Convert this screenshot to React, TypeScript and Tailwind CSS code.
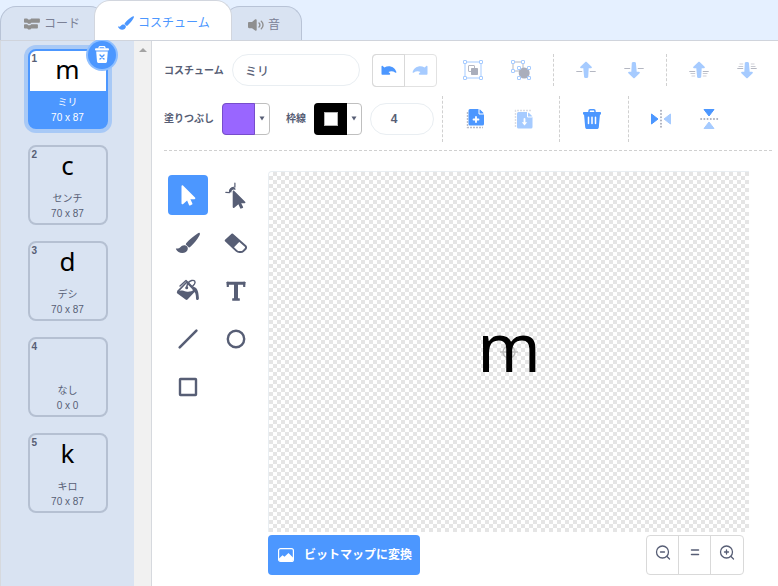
import { useState } from "react";
import type { ReactNode } from "react";

const costumes = [
  { name: "ミリ", glyph: "m", size: "70 x 87" },
  { name: "センチ", glyph: "c", size: "70 x 87" },
  { name: "デシ", glyph: "d", size: "70 x 87" },
  { name: "なし", glyph: "", size: "0 x 0" },
  { name: "キロ", glyph: "k", size: "70 x 87" },
];

const PAGE = "M2 0h9l5 5v10a1.5 1.5 0 0 1-1.5 1.5H2A1.500 1.500 0 0 1 .5 15V1.500A1.500 1.500 0 0 1 2 0z";

const UNDO =
  "M2.500 6.500c0-.7.700-1 1.200-.5l1.700 1.500c4.700-2.600 10.300-.6 12 4.600.2.600-.3 1-.9.600-2.500-1.600-4.600-1.800-7-.8l1.400 1.400c.6.600.3 1.400-.5 1.400H3.500c-.6 0-1-.4-1-1z";

function BrushShape() {
  return (
    <>
      <path d="M31.600 9.900c.6.500.4 1.600-.2 2.600-2 3.700-5.600 8.300-9 11.300-.6.600-1.300.9-1.700.5l-2.600-2.500c-.5-.5-.2-1.200.3-1.800 3.200-3.700 7.700-7.400 11.200-9.600.8-.5 1.500-.9 2-.5z" />
      <path d="M16.900 22.200c2 .3 3.200 2 2.900 3.900-.4 2.500-2.800 4-5.600 4-2.700 0-5-1.700-6.300-4.100-.2-.4.100-.7.500-.6 1.600.5 2.800.1 3.900-1.200 1.200-1.500 2.700-2.300 4.600-2z" />
    </>
  );
}

// All tool drawings share a 40x40 box
const tools: { id: string; art: ReactNode }[] = [
  {
    id: "選択",
    art: <path d="M13.500 11.200c0-.9.900-1.200 1.500-.6l12 12c.7.700.3 1.600-.6 1.600h-4l2 4.300c.2.500 0 .9-.4 1.100l-1.900.8c-.5.200-.9 0-1.100-.5l-1.900-4.500-3.900 3.500c-.7.600-1.700.2-1.700-.7z" />,
  },
  {
    id: "形を変える",
    art: (
      <>
        <path d="M16.700 16.300c0-.9.800-1.200 1.400-.6l11 11c.7.700.3 1.500-.5 1.500h-3.400l1.900 3.700c.2.500 0 .8-.4 1l-1.500.7c-.4.200-.8 0-1-.4l-1.800-4-4.100 3.500c-.7.600-1.600.2-1.600-.7z" />
        <path d="M13.300 17.300c-.7-2.500.5-4.500 3.700-5.200l2.300 1.200.2 1.700c-1.800-1-4-.6-4.200 2.400z" />
        <path d="M9.800 17.400l3.500.3c.3-3.600 2-5.500 5.600-5.700V8" fill="none" stroke="currentColor" strokeWidth="1.200" strokeLinecap="round" />
      </>
    ),
  },
  { id: "筆", art: <BrushShape /> },
  {
    id: "消しゴム",
    art: (
      <>
        <path d="M16.300 11.500L9.700 17.600 20.500 27.900c.8.800 1.800 1.200 2.900 1.200h1.400c1 0 1.800-.3 2.500-1l2.100-2.100c.9-.9.900-2.200 0-3.100z" fill="none" stroke="currentColor" strokeWidth="2" strokeLinejoin="round" />
        <path d="M16 10.700l8.200 7.300-7.200 7.200-7.800-7.500z" />
      </>
    ),
  },
  {
    id: "塗りつぶし",
    art: (
      <>
        <path d="M9.600 20.600l9-9.300 8.300 8.300" fill="none" stroke="currentColor" strokeWidth="1.600" strokeLinejoin="round" />
        <path d="M9.600 20c3.400-1.300 6-.2 8.400.4 3 .8 6-.3 8-1.700l1.500 1.300-8 8.500c-.6.600-1.300.6-1.900.1L9.400 22.400c-.8-.5-.7-1.700.2-2.400z" />
        <path d="M12 15l6-5.600 5.800 5.800M18.700 16.500c.4-3.500 2.600-6.300 5-7 3-.7 4.200 1.200 2.700 3.600l-2 2.400" fill="none" stroke="currentColor" strokeWidth="1.400" strokeLinecap="round" strokeLinejoin="round" />
        <circle cx="18.700" cy="16.800" r="1.500" />
        <path d="M24.700 15.500c4 .9 5.700 3.200 6.200 11.500.1 2.700-2.900 2.800-2.900.2 0-3.200-.3-5.700-3.300-8.200z" />
      </>
    ),
  },
  {
    id: "テキスト",
    art: (
      <>
        <rect x="10.700" y="10.700" width="18.600" height="3" rx="0.500" />
        <rect x="10.700" y="10.700" width="2.200" height="5.300" rx="0.500" />
        <rect x="27.100" y="10.700" width="2.200" height="5.300" rx="0.500" />
        <rect x="18" y="12" width="4" height="17" />
        <rect x="16.200" y="27.300" width="7.600" height="2.400" rx="0.500" />
      </>
    ),
  },
  { id: "直線", art: <path d="M11.700 28.300l16.700-16.700" stroke="currentColor" strokeWidth="2.600" strokeLinecap="round" /> },
  { id: "円", art: <circle cx="20" cy="20" r="8.200" fill="none" stroke="currentColor" strokeWidth="2.400" /> },
  { id: "四角形", art: <rect x="12" y="12" width="16" height="16" rx="0.500" fill="none" stroke="currentColor" strokeWidth="2.400" /> },
];

function IconButton({ label, children }: { label: string; children: ReactNode }) {
  return (
    <button aria-label={label} className="size-5 shrink-0">
      <svg viewBox="0 0 20 20" className="size-5 overflow-visible" fill="none">
        {children}
      </svg>
    </button>
  );
}

function Handle({ x, y }: { x: number; y: number }) {
  return <rect x={x} y={y} width="3" height="3" rx="0.300" fill="white" stroke="#a6cbff" />;
}

function Arrow({ down = false, lines }: { down?: boolean; lines: number }) {
  return (
    <g transform={down ? "rotate(180 10 10)" : undefined}>
      <path d="M9.300 2.100c.4-.4 1-.4 1.400 0l4.900 4.700c.6.600.2 1.500-.6 1.500h-2.300l-.5 8.700c-.1 1.300-4 1.300-4.100 0l-.8-8.700H5c-.8 0-1.200-.9-.6-1.500z" fill="#a6cbff" />
      <path d="M.3 11.500h5.900M13.800 11.500h5.900" stroke="#b4b7c2" />
      {lines > 1 && (
        <>
          <path d="M1.500 13.500h4.700M13.800 13.500h4.700" stroke="#c8cad2" />
          <path d="M2.500 16h3.700M13.800 16h3.700" stroke="#dfe0e5" strokeWidth="1.500" />
        </>
      )}
    </g>
  );
}

function Tabs() {
  return (
    <nav className="flex h-10 items-end bg-[#e5f0ff] text-xs text-[#7b8196]">
      <button className="flex h-[34px] w-[106px] items-center gap-1 rounded-t-2xl border border-b-0 border-[#b8c3d6] bg-[#d9e3f2] pl-[23px]">
        <svg viewBox="0 0 16 12" className="h-3 w-4" fill="#8f8f8f">
          <path d="M.8.500h2.400l1 1h2l1-1h7.900c.5 0 .8.300.8.800V4c0 .5-.3.800-.8.800H7.300l-1 1H4.200l-1-1H.8C.3 4.800 0 4.500 0 4V1.300C0 .8.300.5.800.5z" />
          <path d="M.8 6.200h2.400l1 1h2l1-1h5.900c.5 0 .8.300.8.800v2.700c0 .5-.3.800-.8.800H7.300l-1 1H4.200l-1-1H.8c-.5 0-.8-.3-.8-.8V7c0-.5.300-.8.800-.8z" />
        </svg>
        コード
      </button>
      <button className="relative z-10 -ml-3 flex h-10 w-[138px] items-center gap-1 rounded-t-2xl border border-b-0 border-[#d2d6de] bg-white pt-1 pl-[23px] text-[#4c97ff]">
        <svg viewBox="8 9 24 22" className="h-4 w-4" fill="currentColor">
          <BrushShape />
        </svg>
        コスチューム
      </button>
      <button className="-ml-2 flex h-[34px] w-[78px] items-center gap-1 rounded-t-2xl border border-b-0 border-[#b8c3d6] bg-[#d9e3f2] pt-[2px] pl-[23px]">
        <svg viewBox="0 0 16 12" className="h-3 w-4" fill="#8f8f8f">
          <path d="M7.200.3C8 0 8.700.3 8.700 1v10c0 .8-.8 1-1.500.6L4 9.200H1.200C.4 9.200 0 8.800 0 8V4.200C0 3.400.4 3 1.200 3H4z" />
          <path d="M11 4c1.200 1 1.200 3 0 4M13.300 2.300c2.300 2 2.300 5.400 0 7.400" fill="none" stroke="#8f8f8f" strokeWidth="1.400" strokeLinecap="round" />
        </svg>
        音
      </button>
    </nav>
  );
}

function CostumeList() {
  const [current, setCurrent] = useState(0);

  return (
    <aside className="flex w-[152px] shrink-0 border-x border-[#d6d9de] bg-[#d9e3f2]">
      <ul className="flex flex-1 flex-col items-center gap-4 pt-2">
        {costumes.map((c, i) => {
          const on = i === current;
          return (
            <li key={c.name} className="relative">
              <button
                onClick={() => setCurrent(i)}
                className={`flex size-20 flex-col overflow-hidden rounded-lg border-2 text-[10px] leading-4 ${
                  on
                    ? "border-[#4c97ff] bg-[#4c97ff] text-white ring-4 ring-[#4c97ff]/35"
                    : "border-[#b5c0d2] text-[#575e75]"
                }`}
              >
                <span className={`flex h-10 w-full justify-center ${on ? "bg-white" : ""}`}>
                  <span className="font-['Noto_Sans'] text-[26px] leading-9 text-black">{c.glyph}</span>
                </span>
                <span className="w-full pt-1">{c.name}</span>
                <span className="-mt-px w-full">{c.size}</span>
              </button>
              <span className="absolute top-1 left-1 text-[10px] leading-3 font-bold text-[#575e75]">{i + 1}</span>
              {on && (
                <button
                  aria-label="削除"
                  className="absolute -top-2 -right-2 flex size-7 items-center justify-center rounded-full bg-[#4c97ff] ring-2 ring-[#8fbfff]"
                >
                  <svg viewBox="0 0 16 18" className="h-[18px] w-4">
                    <path d="M5 2.500V2c0-.9.600-1.500 1.500-1.500h3c.9 0 1.500.6 1.500 1.500v.5" fill="none" stroke="white" strokeWidth="1.300" />
                    <rect x="1" y="2.300" width="14" height="2.200" rx="1" fill="white" />
                    <path d="M2.200 5.500h11.600l-.8 10c-.1.900-.7 1.500-1.600 1.500H4.600c-.9 0-1.500-.6-1.600-1.500z" fill="white" />
                    <path d="M6 9l4 4M10 9l-4 4" stroke="#4c97ff" strokeWidth="1.400" strokeLinecap="round" />
                  </svg>
                </button>
              )}
            </li>
          );
        })}
      </ul>
      <div className="w-[17px] bg-[#f1f1f1] pt-[7px]">
        <svg viewBox="0 0 8 4" className="mx-auto h-1 w-2" fill="#a3a3a3">
          <path d="M4 0l4 4H0z" />
        </svg>
      </div>
    </aside>
  );
}

function Swatch({ id, children }: { id: string; children: ReactNode }) {
  return (
    <button id={id} className="flex h-8 w-12 shrink-0 rounded border border-[#bfbfbf]">
      {children}
      <span className="flex h-full flex-1 items-center justify-center">
        <svg viewBox="0 0 6 5" className="h-[5px] w-[6px]" fill="#575e75">
          <path d="M.5.500h5L3 4.500z" />
        </svg>
      </span>
    </button>
  );
}

function Toolbar() {
  return (
    <div className="mr-[6px] ml-3 border-b border-dashed border-[#d0d0d0] text-[10px] font-bold">
      <div className="flex h-[58px] items-center">
        <label htmlFor="costume" className="w-[68px] shrink-0">コスチューム</label>
        <input
          id="costume"
          defaultValue="ミリ"
          className="h-8 w-32 rounded-full border border-[#e9eef2] px-3 text-xs font-medium outline-none"
        />
        <div className="ml-3 flex h-[33px] w-[65px] shrink-0 rounded border border-[#e2e2e2]">
          <button aria-label="取り消し" className="-m-px flex w-[33px] items-center justify-center rounded-l border border-[#d9d9d9]">
            <svg viewBox="0 0 20 20" className="size-5" fill="#4c97ff">
              <path d={UNDO} />
            </svg>
          </button>
          <button aria-label="やり直し" className="flex flex-1 items-center justify-center">
            <svg viewBox="0 0 20 20" className="size-5 -scale-x-100" fill="#a6cbff">
              <path d={UNDO} />
            </svg>
          </button>
        </div>
        <div className="ml-[26px] flex gap-7">
          <IconButton label="グループ化">
            <rect x="2" y="2" width="16" height="16" stroke="#a6cbff" />
            <Handle x={0.5} y={0.5} />
            <Handle x={16.5} y={0.5} />
            <Handle x={0.5} y={16.5} />
            <Handle x={16.5} y={16.5} />
            <rect x="5.500" y="5.500" width="6" height="6" rx="0.500" stroke="#b4b7c2" />
            <rect x="8" y="8" width="7" height="7" rx="0.800" fill="#aaaebb" />
          </IconButton>
          <IconButton label="グループ解除">
            <path d="M2 2h10v9H2z" stroke="#b4b7c2" />
            <circle cx="13.200" cy="13" r="5.500" fill="#aaaebb" />
            <Handle x={0.5} y={0.5} />
            <Handle x={10.5} y={0.5} />
            <Handle x={0.5} y={9.5} />
            <Handle x={6.5} y={6.5} />
            <Handle x={16.5} y={6.5} />
            <Handle x={6.5} y={16.5} />
            <Handle x={16.5} y={16.5} />
          </IconButton>
        </div>
        <div className="ml-[22px] flex h-8 items-center gap-7 border-l border-dashed border-[#d0d0d0] pl-[22px]">
          <IconButton label="手前に出す">
            <Arrow lines={1} />
          </IconButton>
          <IconButton label="奥に下げる">
            <Arrow down lines={1} />
          </IconButton>
        </div>
        <div className="ml-[22px] flex h-8 items-center gap-7 border-l border-dashed border-[#d0d0d0] pl-[22px]">
          <IconButton label="最前面">
            <Arrow lines={3} />
          </IconButton>
          <IconButton label="最背面">
            <Arrow down lines={3} />
          </IconButton>
        </div>
      </div>

      <div className="-mt-1 flex h-[55px] items-center pb-2">
        <label htmlFor="fill" className="w-[58px] shrink-0">塗りつぶし</label>
        <Swatch id="fill">
          <span className="-m-px w-[33px] rounded-l border border-[#774dcb] bg-[#9966ff]" />
        </Swatch>
        <label htmlFor="outline" className="ml-4 w-7 shrink-0">枠線</label>
        <Swatch id="outline">
          <span className="-m-px flex w-[33px] items-center justify-center rounded-l bg-black">
            <span className="size-[14px] border border-[#b3b3b3] bg-white" />
          </span>
        </Swatch>
        <input
          aria-label="枠線の太さ"
          defaultValue="4"
          className="ml-2 h-8 w-16 rounded-full border border-[#e9eef2] pr-4 text-center text-xs font-bold outline-none"
        />
        <div className="ml-2 flex h-[46px] items-center gap-7 border-l border-dashed border-[#d0d0d0] pl-[23px]">
          <IconButton label="コピー">
            <path d="M1.500 3v15.500H17" stroke="#b9bcc7" strokeWidth="1.400" strokeDasharray="2 1" />
            <path d={PAGE} transform="translate(2)" fill="#4c97ff" />
            <path d="M13 0v5h5" stroke="white" />
            <path d="M14 .500v3.500h3.500z" fill="#4c97ff" />
            <path d="M10 8v5M7.500 10.500h5" stroke="white" strokeWidth="1.800" strokeLinecap="round" />
          </IconButton>
          <IconButton label="貼り付け">
            <path d="M1.500 18V1.500H17" stroke="#dcdde3" strokeWidth="1.400" strokeDasharray="2 1" />
            <path d={PAGE} transform="translate(2.500 3)" fill="#a6cbff" />
            <path d="M13.500 3v5h5" stroke="white" />
            <path d="M14.500 3.500v3.500h3.500z" fill="#a6cbff" />
            <path d="M10.500 10v4" stroke="white" strokeWidth="1.800" strokeLinecap="round" />
            <path d="M7.800 13.200h5.400l-2.700 3.200z" fill="white" />
          </IconButton>
        </div>
        <div className="ml-[25px] flex h-[46px] items-center border-l border-dashed border-[#d0d0d0] pl-[22px]">
          <IconButton label="削除">
            <path d="M7 3V1.900C7 1.200 7.500.800 8.200.800h3.600c.7 0 1.200.4 1.200 1.100V3" stroke="#4c97ff" strokeWidth="1.500" />
            <path d="M2 3h16c.6 0 1 .4 1 1v1.500H1V4c0-.6.400-1 1-1z" fill="#4c97ff" />
            <path d="M2 5h16l-1.200 13.200c-.1 1.100-.8 1.800-1.900 1.800H5.100c-1.100 0-1.800-.7-1.900-1.800z" fill="#4c97ff" />
            <path d="M6.500 8.200v6.300M10 8.200v6.300M13.500 8.200v6.300" stroke="white" strokeWidth="1.500" strokeLinecap="round" />
          </IconButton>
        </div>
        <div className="ml-[26px] flex h-[46px] items-center gap-7 border-l border-dashed border-[#d0d0d0] pl-[22px]">
          {[0, 90].map((turn) => (
            <IconButton key={turn} label={turn ? "上下反転" : "左右反転"}>
              <g transform={`rotate(${turn} 10 10)`}>
                <path d="M.5 5v10l6.500-5z" fill="#4c97ff" stroke="#4c97ff" strokeLinejoin="round" />
                <path d="M19.500 5v10L13 10z" fill="#a6cbff" stroke="#a6cbff" strokeLinejoin="round" />
                <path d="M10 1.800v17" stroke="#aaaebb" strokeWidth="2" strokeLinecap="round" strokeDasharray="0.010 3.200" />
              </g>
            </IconButton>
          ))}
        </div>
      </div>
    </div>
  );
}

function PaintArea() {
  const [tool, setTool] = useState("選択");

  return (
    <div className="flex pt-5 pr-[29px] pl-4">
      <div className="grid shrink-0 grid-cols-2 content-start gap-2 pt-1">
        {tools.map((t) => (
          <button
            key={t.id}
            aria-label={t.id}
            onClick={() => setTool(t.id)}
            className={`size-10 rounded ${t.id === tool ? "bg-[#4c97ff] text-white" : "text-[#575e75]"}`}
          >
            <svg viewBox="0 0 40 40" className="size-10" fill="currentColor">
              {t.art}
            </svg>
          </button>
        ))}
      </div>

      <div className="ml-3 min-w-0 flex-1">
        <div className="relative flex aspect-4/3 items-center justify-center overflow-hidden rounded-tl border-t border-l border-[#e9eef2] bg-white bg-[conic-gradient(#e5e5e5_25%,#ffffff_0_50%,#e5e5e5_0_75%,#ffffff_0)] bg-[length:8px_8px] pb-3">
          <svg viewBox="0 0 20 20" className="absolute inset-0 m-auto size-5" fill="none" stroke="#bdbdbd" strokeWidth="1.500">
            <circle cx="10" cy="10" r="6" />
            <path d="M10 1v7M10 12v7M1 10h7M12 10h7" />
          </svg>
          <span className="relative font-['Noto_Sans'] text-[68px] leading-none text-black">m</span>
        </div>
        <div className="mt-[3px] flex justify-between pr-[5px]">
          <button className="flex h-10 items-center gap-[10px] rounded bg-[#4c97ff] pr-2 pl-[10px] text-xs font-bold text-white">
            <svg viewBox="0 0 16 14" className="h-[14px] w-4" fill="none">
              <rect x="0.600" y="0.600" width="14.800" height="12.800" rx="2" stroke="white" strokeWidth="1.200" />
              <path d="M1 10.500l3.500-3.300 2 1.600 4-3.800 4.500 4.500v2c0 1-.7 1.700-1.700 1.700H2.700c-1 0-1.700-.7-1.700-1.700z" fill="white" />
            </svg>
            ビットマップに変換
          </button>
          <div className="flex h-10 divide-x divide-[#d9d9d9] rounded border border-[#d9d9d9]">
            <button aria-label="縮小" className="flex w-8 items-center justify-center pb-1">
              <svg viewBox="0 0 16 16" className="size-4" fill="none" stroke="#575e75" strokeWidth="1.300" strokeLinecap="round">
                <circle cx="7.500" cy="7" r="6" />
                <path d="M12 11.500l2.500 2.500M5.500 7h4" />
              </svg>
            </button>
            <button aria-label="リセット" className="flex w-8 items-center justify-center pb-1">
              <svg viewBox="0 0 16 16" className="size-4" stroke="#575e75" strokeWidth="1.500" strokeLinecap="round">
                <path d="M4.500 5h7M4.500 9.500h7" />
              </svg>
            </button>
            <button aria-label="拡大" className="flex w-8 items-center justify-center pb-1">
              <svg viewBox="0 0 16 16" className="size-4" fill="none" stroke="#575e75" strokeWidth="1.300" strokeLinecap="round">
                <circle cx="7.500" cy="7" r="6" />
                <path d="M12 11.500l2.500 2.500M5.500 7h4M7.500 5v4" />
              </svg>
            </button>
          </div>
        </div>
      </div>
    </div>
  );
}

export default function App() {
  return (
    <div className="flex min-h-screen flex-col bg-white font-['Liberation_Sans','Noto_Sans_CJK_JP',sans-serif] text-[#575e75]">
      <Tabs />
      <div className="flex flex-1 border-t border-[#d0d4dc]">
        <CostumeList />
        <main className="min-w-0 flex-1">
          <Toolbar />
          <PaintArea />
        </main>
      </div>
    </div>
  );
}
